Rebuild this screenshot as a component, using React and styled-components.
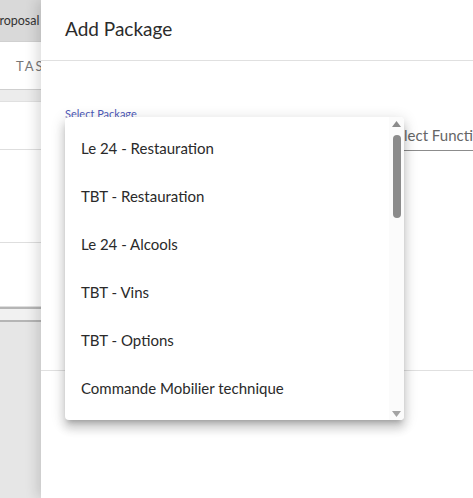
import React from "react";
import styled, { createGlobalStyle } from "styled-components";

const GlobalStyle = createGlobalStyle`
  html, body {
    margin: 0;
    padding: 0;
    width: 473px;
    height: 498px;
    overflow: hidden;
    font-family: Lato, "Liberation Sans", sans-serif;
  }
`;

const Screen = styled.div`
  position: relative;
  width: 473px;
  height: 498px;
  overflow: hidden;
  background: #fff;
`;

/* page behind the drawer */
const Page = styled.div`
  display: flex;
  flex-direction: column;
  height: 100%;
  & > * {
    flex-shrink: 0;
  }
`;
const TabBar = styled.div`
  height: 41px;
  background: #d9d9d9;
  border-bottom: 1px solid #d0d0d0;
  display: flex;
  align-items: center;
`;
const TabLabel = styled.span`
  margin-left: -8px;
  font-size: 12.5px;
  color: #333;
`;
const SubTabs = styled.div`
  height: 47px;
  border-bottom: 1px solid #cfcfcf;
  display: flex;
  align-items: center;
  padding-left: 16px;
`;
const SubTab = styled.span`
  font-size: 13px;
  letter-spacing: 2px;
  color: #777;
`;
const Band = styled.div`
  height: 11px;
  background: #ececec;
  border-bottom: 1px solid #e0e0e0;
`;
const Row = styled.div`
  height: ${(p) => p.h}px;
  border-bottom: 1px solid #dedede;
`;
const Footer = styled.div`
  height: 11px;
  border-top: 2px solid #b5b5b5;
  border-bottom: 2px solid #b5b5b5;
  background: #f1f1f1;
`;
const Grey = styled.div`
  flex: 1;
  background: #e6e6e6;
`;

/* drawer */
const Drawer = styled.div`
  position: absolute;
  top: 0;
  left: 41px;
  right: 0;
  bottom: 0;
  background: #fff;
  box-shadow: -4px 0 12px rgba(0, 0, 0, 0.14);
  display: flex;
  flex-direction: column;
`;
const Header = styled.div`
  height: 60px;
  border-bottom: 1px solid #e0e0e0;
  display: flex;
  align-items: center;
  padding: 0 24px;
`;
const Title = styled.h2`
  margin: 0;
  margin-top: -4px;
  font-size: 19px;
  font-weight: 400;
  color: #2b2b2b;
`;
const Body = styled.div`
  height: 310px;
  border-bottom: 1px solid #e0e0e0;
  padding: 46px 0 0 24px;
  box-sizing: border-box;
  display: flex;
  gap: 8px;
`;
const Field = styled.div`
  width: ${(p) => p.w}px;
  flex-shrink: 0;
`;
const Label = styled.div`
  font-size: 11px;
  height: 13px;
  color: ${(p) => (p.active ? "#4d58b8" : "transparent")};
`;
const SelectBox = styled.div`
  height: 30px;
  border-bottom: 1px solid #8c8c8c;
  display: flex;
  align-items: center;
  font-size: 15px;
  color: #666;
  white-space: nowrap;
`;

/* dropdown menu */
const Menu = styled.div`
  position: absolute;
  left: 65px;
  top: 117px;
  width: 339px;
  height: 303px;
  background: #fff;
  border-radius: 4px;
  overflow: hidden;
  box-shadow: 0 5px 5px -3px rgba(0, 0, 0, 0.2), 0 8px 10px 1px rgba(0, 0, 0, 0.14),
    0 3px 14px 2px rgba(0, 0, 0, 0.12);
`;
const List = styled.ul`
  list-style: none;
  margin: 0;
  padding: 7px 0;
`;
const Item = styled.li`
  height: 48px;
  display: flex;
  align-items: center;
  padding-left: 16px;
  font-size: 15px;
  color: #2a2a2a;
`;
const Scrollbar = styled.div`
  position: absolute;
  top: 0;
  right: 0;
  width: 15px;
  height: 100%;
  background: #fbfbfb;
  display: flex;
  flex-direction: column;
  align-items: center;
`;
const Arrow = styled.div`
  height: 13px;
  display: flex;
  align-items: center;
  justify-content: center;
  margin-top: ${(p) => (p.down ? "auto" : "0")};
`;
const Thumb = styled.div`
  width: 8px;
  height: 83px;
  margin-top: 5px;
  border-radius: 4px;
  background: #8b8b8b;
`;

const items = [
  "Le 24 - Restauration",
  "TBT - Restauration",
  "Le 24 - Alcools",
  "TBT - Vins",
  "TBT - Options",
  "Commande Mobilier technique",
  "Commande Mobilier",
];

function App() {
  return (
    <Screen>
      <GlobalStyle />
      <Page>
        <TabBar>
          <TabLabel>Proposal</TabLabel>
        </TabBar>
        <SubTabs>
          <SubTab>TASKS</SubTab>
        </SubTabs>
        <Band />
        <Row h={47} />
        <Row h={92} />
        <Row h={63} />
        <Footer />
        <Grey />
      </Page>

      <Drawer>
        <Header>
          <Title>Add Package</Title>
        </Header>
        <Body>
          <Field w={315}>
            <Label active>Select Package</Label>
            <SelectBox />
          </Field>
          <Field w={200}>
            <Label />
            <SelectBox>Select Function</SelectBox>
          </Field>
        </Body>
      </Drawer>

      <Menu>
        <List>
          {items.map((it) => (
            <Item key={it}>{it}</Item>
          ))}
        </List>
        <Scrollbar>
          <Arrow>
            <svg width="9" height="6" viewBox="0 0 9 6">
              <path d="M4.5 0 L9 6 L0 6 Z" fill="#8b8b8b" />
            </svg>
          </Arrow>
          <Thumb />
          <Arrow down>
            <svg width="9" height="6" viewBox="0 0 9 6">
              <path d="M0 0 L9 0 L4.5 6 Z" fill="#a3a3a3" />
            </svg>
          </Arrow>
        </Scrollbar>
      </Menu>
    </Screen>
  );
}

export default App;
